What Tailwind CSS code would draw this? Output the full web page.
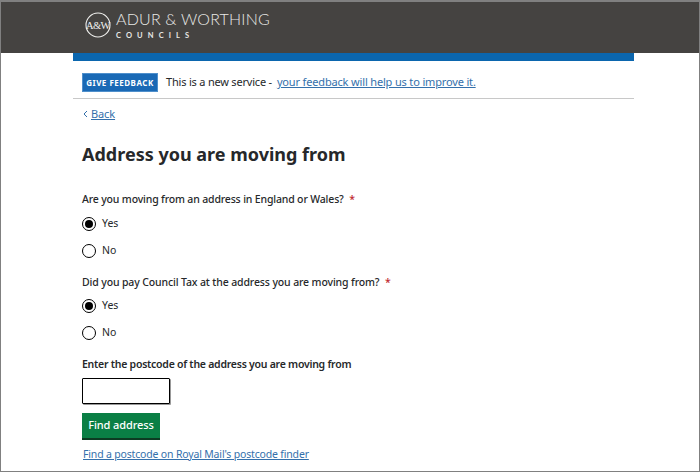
<!DOCTYPE html>
<html lang="en">
<head>
    <meta charset="UTF-8">
    <title>Address you are moving from</title>
    <script src="https://cdn.jsdelivr.net/npm/@tailwindcss/browser@4"></script>
</head>
<body class="bg-white">
<div class="w-[700px] h-[472px] overflow-hidden border-x border-b border-t-2 border-[#808080] font-['Noto_Sans',sans-serif] text-[#26282a]">

    <!-- Council header -->
    <header class="h-[51px] bg-[#454341] pl-[84px] pt-[8px] flex gap-[5px] text-[#e8e8e6]">
        <svg class="w-[26px] h-[26px] mt-[2px]" viewBox="0 0 26 26" fill="none">
            <circle cx="13" cy="13" r="12" stroke="#f0f0ee" stroke-width="1.1"/>
            <text x="13" y="16.5" text-anchor="middle" font-family="Liberation Serif" font-size="10.5" letter-spacing="-0.6" fill="#f0f0ee">A&amp;W</text>
        </svg>
        <div class="font-['Lato',sans-serif]">
            <div class="text-[16px] leading-[18px] font-light tracking-[0.2px]">ADUR &amp; WORTHING</div>
            <div class="text-[7.5px] leading-[10px] mt-[3px] font-bold tracking-[5.1px]">COUNCILS</div>
        </div>
    </header>

    <main class="ml-[72px] w-[561px]">
        <div class="h-[8px] bg-[#0b66ae]"></div>

        <!-- Feedback banner -->
        <div class="h-[38px] border-b border-[#c8c8c8] pl-[9px] pt-[12px] flex items-start text-[11px] leading-[17px]">
            <span class="w-[76px] h-[19px] bg-[#1a69b5] border border-[#4f8fcb] text-white text-[8px] leading-[17px] font-bold tracking-[0.5px] text-center">GIVE FEEDBACK</span>
            <span class="ml-[8px] tracking-[-0.2px]">This is a new service -</span>
            <a href="#" class="ml-[5px] tracking-[-0.16px] text-[#3470ab] underline">your feedback will help us to improve it.</a>
        </div>

        <div class="pl-[9px]">
            <div class="mt-[7px] flex items-center text-[11px] leading-[16px] tracking-[-0.1px] text-[#3470ab]">
                <svg class="w-[5px] h-[8px] ml-[1px] mr-[3px]" viewBox="0 0 5 8" fill="none"><path d="M4 1 1 4l3 3" stroke="#3470ab" stroke-width="1"/></svg>
                <a href="#" class="underline">Back</a>
            </div>

            <h1 class="mt-[19px] text-[18px] leading-[26px] font-bold">Address you are moving from</h1>

            <!-- Question 1 -->
            <p class="mt-[24px] text-[10.5px] leading-[16px] font-medium tracking-[-0.16px]">Are you moving from an address in England or Wales? <span class="text-[#c0272d] ml-[3px]">*</span></p>
            <div class="mt-[10px] flex items-center gap-[6px] h-[14px] text-[10.5px]">
                <span class="w-[14px] h-[14px] rounded-full border-[1.5px] border-black flex items-center justify-center"><span class="w-[8px] h-[8px] rounded-full bg-black"></span></span>Yes
            </div>
            <div class="mt-[13px] flex items-center gap-[6px] h-[14px] text-[10.5px]">
                <span class="w-[14px] h-[14px] rounded-full border-[1.5px] border-black"></span>No
            </div>

            <!-- Question 2 -->
            <p class="mt-[16px] text-[10.5px] leading-[16px] font-medium tracking-[-0.13px]">Did you pay Council Tax at the address you are moving from? <span class="text-[#c0272d] ml-[3px]">*</span></p>
            <div class="mt-[9px] flex items-center gap-[6px] h-[14px] text-[10.5px]">
                <span class="w-[14px] h-[14px] rounded-full border-[1.5px] border-black flex items-center justify-center"><span class="w-[8px] h-[8px] rounded-full bg-black"></span></span>Yes
            </div>
            <div class="mt-[13px] flex items-center gap-[6px] h-[14px] text-[10.5px]">
                <span class="w-[14px] h-[14px] rounded-full border-[1.5px] border-black"></span>No
            </div>

            <!-- Postcode -->
            <p class="mt-[16px] text-[10.5px] leading-[16px] font-semibold tracking-[-0.25px]">Enter the postcode of the address you are moving from</p>
            <input type="text" class="block mt-[6px] w-[88px] h-[26px] border border-black rounded-[1px] shadow-[1px_1px_0_#999] bg-white">
            <button class="block mt-[9px] w-[78px] h-[27px] bg-[#0a7f45] border-b-2 border-[#0c3b22] text-white text-[11px] tracking-[-0.1px] font-medium">Find address</button>
            <a href="#" class="inline-block mt-[4px] ml-[1px] text-[10.5px] leading-[16px] tracking-[-0.17px] text-[#3470ab] underline">Find a postcode on Royal Mail's postcode finder</a>
        </div>
    </main>
</div>
</body>
</html>
